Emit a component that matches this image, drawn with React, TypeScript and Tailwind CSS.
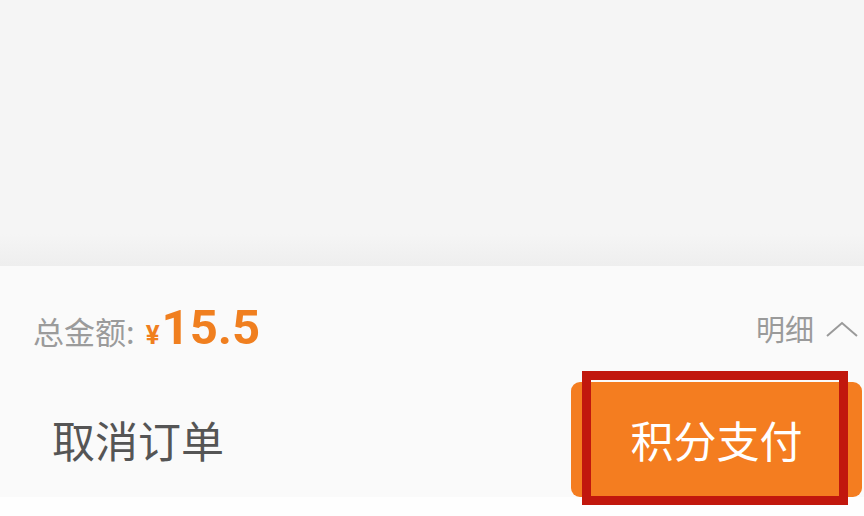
import React from "react";

const CJK = "font-['Noto_Sans_CJK_SC','Noto_Sans',sans-serif]";

const OrderFooter = () => {
  return (
    <div className="w-full h-[516px] flex flex-col bg-[#f5f5f5] overflow-hidden">
      {/* Page content area (empty) */}
      <div className="h-[266px] flex flex-col">
        <div className="flex-1" />
        <div className="h-[32px] bg-gradient-to-b from-[#f5f5f5] to-[#eeeeee]" />
      </div>
      {/* Bottom bar */}
      <div className="flex-1 flex flex-col bg-[#fafafa]">
        {/* Total row */}
        <div className="h-[116px] pt-[10px] flex items-center justify-between pl-[33px] pr-[6px]">
          <div className="flex items-baseline">
            <span className={`${CJK} text-[31px] text-[#9b9b9b]`}>总金额:</span>
            <span className="ml-[11px] font-['Roboto',sans-serif] font-bold text-[26px] text-[#f07f1f]">¥</span>
            <span className="ml-[2px] font-['Roboto',sans-serif] font-bold text-[49px] leading-none text-[#f07f1f]">15.5</span>
          </div>
          <div className="flex items-center gap-[12px]">
            <span className={`${CJK} text-[29px] text-[#9a9a9a]`}>明细</span>
            <svg width="32" height="16" viewBox="0 0 32 16" fill="none">
              <polyline points="1,15 16,2 31,15" stroke="#9a9a9a" strokeWidth="2" />
            </svg>
          </div>
        </div>
        {/* Action row */}
        <div className="h-[115px] flex items-center justify-between pl-[52px] pr-[2px]">
          <span className={`${CJK} text-[43px] text-[#555555]`}>取消订单</span>
          <div className="relative w-[291px] h-full">
            <button className={`${CJK} w-full h-full rounded-[9px] bg-[#f47d20] text-white text-[43px]`}>
              积分支付
            </button>
            {/* Annotation frame */}
            <div className="absolute left-[11px] top-[-11px] w-[266px] h-[134px] border-[9px] border-[#c1170d] pointer-events-none" />
          </div>
        </div>
        <div className="flex-1 bg-[#fefefe]" />
      </div>
    </div>
  );
};

export default function App() {
  return <OrderFooter />;
}
